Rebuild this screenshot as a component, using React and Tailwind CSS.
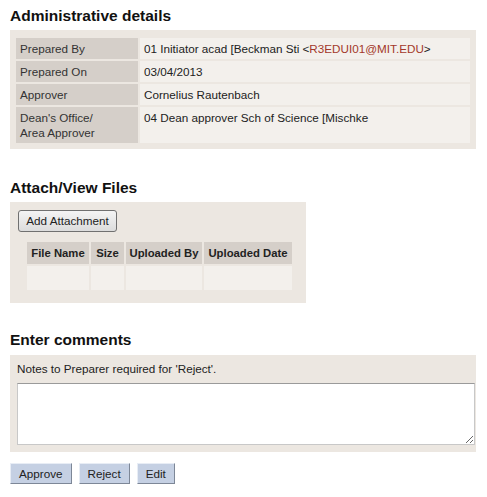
export default function App() {
  const rows = [
    { label: "Prepared By", value: <>01 Initiator acad [Beckman Sti &lt;<span className="text-[#a3382a]">R3EDUI01@MIT.EDU</span>&gt;</> },
    { label: "Prepared On", value: "03/04/2013" },
    { label: "Approver", value: "Cornelius Rautenbach" },
    { label: <>Dean's Office/<br />Area Approver</>, value: "04 Dean approver Sch of Science [Mischke" },
  ];
  const cols = [
    { name: "File Name", w: "w-[62px]" },
    { name: "Size", w: "w-[33px]" },
    { name: "Uploaded By", w: "w-[76px]" },
    { name: "Uploaded Date", w: "w-[88px]" },
  ];

  return (
    <div className="min-h-[497px] w-[487px] bg-white px-[10px] font-['Liberation_Sans',Arial,sans-serif] text-[11.7px] text-[#222]">
      <h2 className="pt-[7px] text-[15.5px] font-bold leading-[18px] text-[#111]">Administrative details</h2>
      <div className="mt-[5px] w-[466px] bg-[#ece7e1] px-[4px] pt-[6px] pb-[4px]">
        <table className="w-full border-separate border-spacing-[2px]">
          <tbody>
            {rows.map((r, i) => (
              <tr key={i}>
                <td className="w-[122px] bg-[#d5cfc9] px-[4px] py-[3px] align-top leading-[15px] text-[#333]">{r.label}</td>
                <td className="bg-[#f3f0ec] px-[4px] py-[3px] align-top leading-[15px] text-[#222]">{r.value}</td>
              </tr>
            ))}
          </tbody>
        </table>
      </div>

      <h2 className="mt-[30px] text-[15.5px] font-bold leading-[18px] text-[#111]">Attach/View Files</h2>
      <div className="mt-[5px] w-[296px] bg-[#ece7e1] px-[8px] pt-[8px] pb-[11px]">
        <button className="h-[22px] w-[99px] rounded-[3px] border border-[#707070] bg-gradient-to-b from-[#f4f4f4] to-[#dcdcdc] text-[11.7px] text-[#222]">
          Add Attachment
        </button>
        <table className="mt-[8px] ml-[7px] border-separate border-spacing-[2px]">
          <thead>
            <tr>
              {cols.map((c) => (
                <th key={c.name} className={`${c.w} h-[22px] bg-[#d5cfc9] p-0 text-center text-[11.3px] font-bold leading-[14px] whitespace-nowrap text-[#222]`}>
                  {c.name}
                </th>
              ))}
            </tr>
          </thead>
          <tbody>
            <tr>
              {cols.map((c) => (
                <td key={c.name} className="h-[24px] bg-[#f3f0ec]" />
              ))}
            </tr>
          </tbody>
        </table>
      </div>

      <h2 className="mt-[28px] text-[15.5px] font-bold leading-[18px] text-[#111]">Enter comments</h2>
      <div className="mt-[6px] w-[466px] bg-[#ece7e1] pt-[7px] pr-[1px] pb-[7px] pl-[7px]">
        <div className="leading-[14px] text-[#222]">Notes to Preparer required for 'Reject'.</div>
        <textarea className="mt-[7px] block h-[62px] w-full border border-[#c8c8c8] border-t-[#9a9a9a] bg-white" />
      </div>

      <div className="mt-[11px] flex gap-[7px]">
        {["Approve", "Reject", "Edit"].map((b) => (
          <button
            key={b}
            className="h-[21px] border border-t-[#e8edf5] border-l-[#e8edf5] border-r-[#7d8797] border-b-[#7d8797] bg-[#c5d0e3] px-[8px] text-[11.7px] leading-[14px] text-[#222]"
          >
            {b}
          </button>
        ))}
      </div>
    </div>
  );
}
